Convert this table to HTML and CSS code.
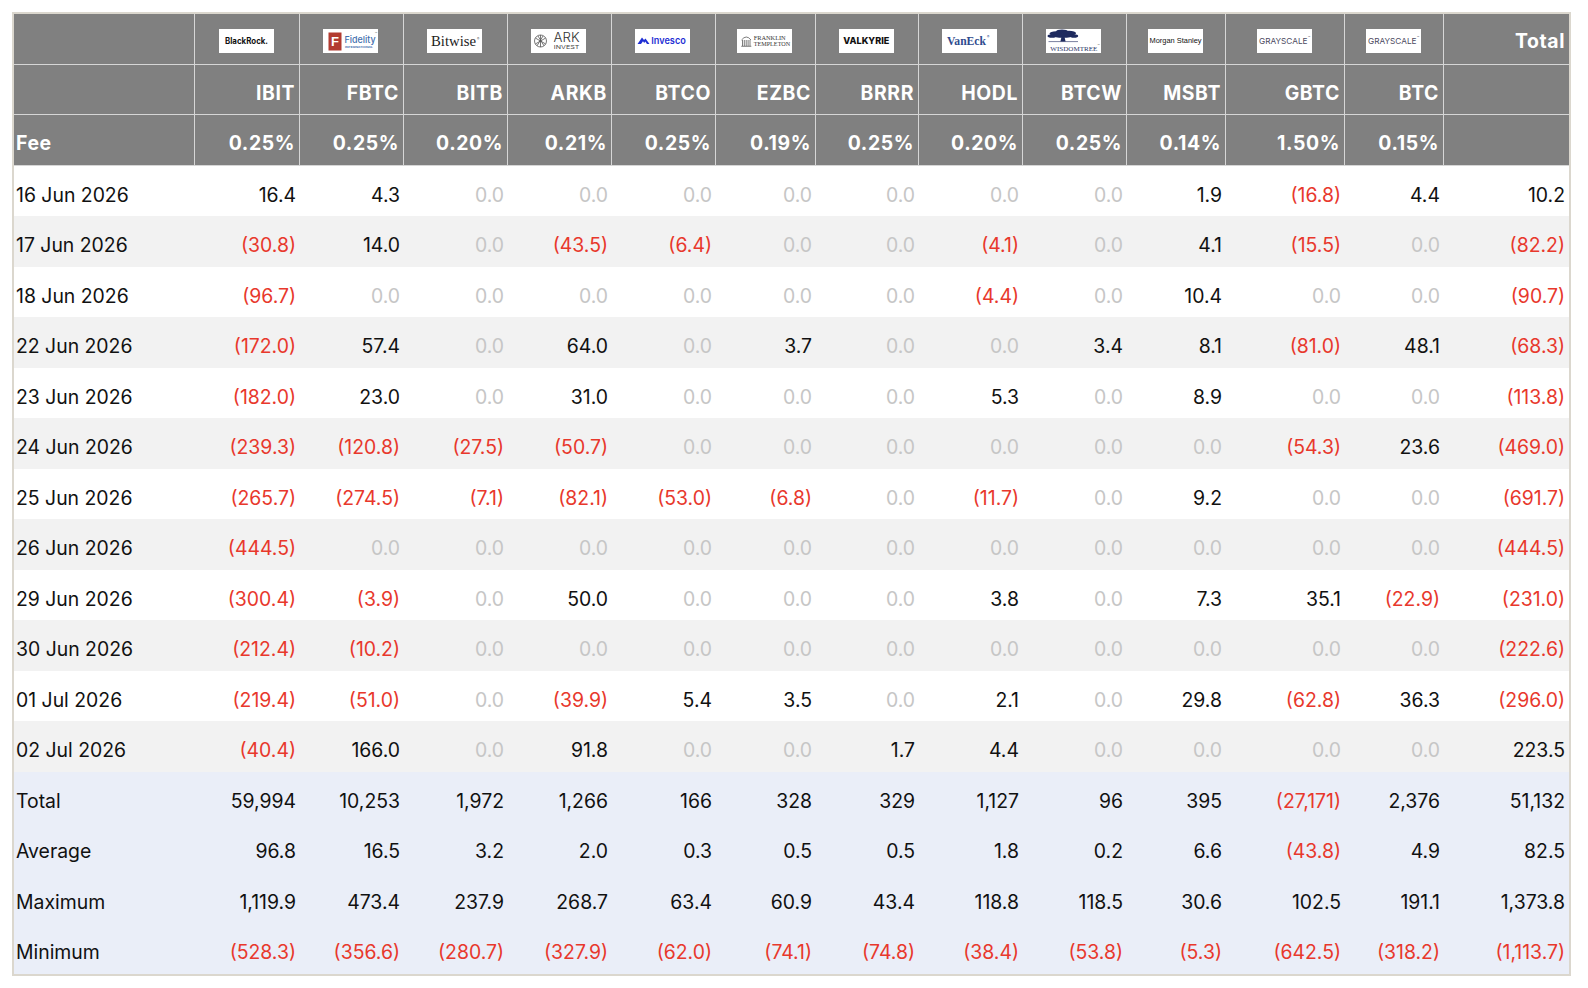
FILE: index.html
```html
<!DOCTYPE html>
<html lang="en">
<head>
<meta charset="utf-8">
<title>Bitcoin ETF Flows</title>
<link rel="stylesheet" href="styles.css">
</head>
<body>
<table class="flows">
  <colgroup>
    <col class="c-date"><col class="c-ibit"><col class="c-std"><col class="c-std"><col class="c-std"><col class="c-std"><col class="c-ezbc"><col class="c-brrr"><col class="c-std"><col class="c-std"><col class="c-msbt"><col class="c-gbtc"><col class="c-btc"><col class="c-total">
  </colgroup>
  <thead>
    <tr class="logos">
      <th></th>
      <th><span class="logo"><svg viewBox="0 0 55 24" width="55" height="24"><text x="27.5" y="15.2" text-anchor="middle" class="t-br" textLength="43" lengthAdjust="spacingAndGlyphs">BlackRock.</text></svg></span></th>
      <th><span class="logo"><svg viewBox="0 0 55 24" width="55" height="24"><rect x="5.5" y="3.5" width="13" height="18" fill="#b23b30"/><text x="12" y="17" text-anchor="middle" class="t-fid-f">F</text><text x="21.5" y="13.5" class="t-fid" textLength="31" lengthAdjust="spacingAndGlyphs">Fidelity</text><text x="22" y="19.2" class="t-fid-s" textLength="28" lengthAdjust="spacingAndGlyphs">INTERNATIONAL</text><text x="52" y="6" class="t-tm">™</text></svg></span></th>
      <th><span class="logo"><svg viewBox="0 0 55 24" width="55" height="24"><text x="4" y="16.8" class="t-bw" textLength="45" lengthAdjust="spacingAndGlyphs">Bitwise</text><text x="50" y="11" class="t-tm">®</text></svg></span></th>
      <th><span class="logo"><svg viewBox="0 0 55 24" width="55" height="24"><g fill="none" stroke="#555" stroke-width="0.8"><circle cx="9.5" cy="12" r="6"/><path d="M9.5 6 L9.5 18 M4.3 9 L14.7 15 M4.3 15 L14.7 9 M6 16.8 L12 7 M13 16.8 L7 7"/></g><text x="22.5" y="12.7" class="t-ark" textLength="26" lengthAdjust="spacingAndGlyphs">ARK</text><text x="22.8" y="20" class="t-ark-s" textLength="25.5" lengthAdjust="spacingAndGlyphs">INVEST</text></svg></span></th>
      <th><span class="logo"><svg viewBox="0 0 55 24" width="55" height="24"><path d="M2.5 15 L7 8.5 L9 11 L10.5 9.5 L14.5 15 L12 15 L10.3 12.6 L9.2 14 L8 12.2 L6 15 Z" fill="#1f2fd4"/><text x="16.3" y="15.3" class="t-inv" textLength="34.5" lengthAdjust="spacingAndGlyphs">Invesco</text></svg></span></th>
      <th><span class="logo"><svg viewBox="0 0 55 24" width="55" height="24"><g fill="none" stroke="#444" stroke-width="0.7"><path d="M4.5 11 Q9.3 5 14 11"/><path d="M5.5 11 V17 M7.3 11 V17 M9.2 11 V17 M11.1 11 V17 M13 11 V17 M4.3 17.3 H14.3"/></g><text x="16.7" y="11.2" class="t-ft" textLength="32" lengthAdjust="spacingAndGlyphs">FRANKLIN</text><text x="16.7" y="16.5" class="t-ft" textLength="36.5" lengthAdjust="spacingAndGlyphs">TEMPLETON</text></svg></span></th>
      <th><span class="logo"><svg viewBox="0 0 55 24" width="55" height="24"><text x="4.3" y="15.2" class="t-val" textLength="46" lengthAdjust="spacingAndGlyphs">VALKYRIE</text></svg></span></th>
      <th><span class="logo"><svg viewBox="0 0 55 24" width="55" height="24"><text x="5" y="16.2" class="t-ve" textLength="39" lengthAdjust="spacingAndGlyphs">VanEck</text><text x="45" y="9" class="t-tm t-tm-ve">®</text></svg></span></th>
      <th><span class="logo"><svg viewBox="0 0 55 24" width="55" height="24"><g fill="#1e2a5e"><ellipse cx="16" cy="2.6" rx="6" ry="2.2"/><ellipse cx="10" cy="4.6" rx="6.5" ry="2.4"/><ellipse cx="23" cy="4.2" rx="7" ry="2.4"/><ellipse cx="6" cy="7" rx="4.5" ry="1.8"/><ellipse cx="28" cy="7" rx="4.2" ry="1.8"/><ellipse cx="17" cy="6.6" rx="10" ry="2.2"/><path d="M15.6 7.5 L18.4 7.5 L19.6 12.4 L14.4 12.4 Z"/></g><path d="M2.5 12.6 H32" stroke="#1e2a5e" stroke-width="0.6"/><text x="4.3" y="21.6" class="t-wt" textLength="47" lengthAdjust="spacingAndGlyphs">WISDOMTREE</text><text x="51.5" y="18" class="t-tm">™</text></svg></span></th>
      <th><span class="logo"><svg viewBox="0 0 55 24" width="55" height="24"><text x="1.5" y="14.4" class="t-ms" textLength="52" lengthAdjust="spacingAndGlyphs">Morgan Stanley</text></svg></span></th>
      <th><span class="logo"><svg viewBox="0 0 55 24" width="55" height="24"><text x="2" y="14.5" class="t-gs" textLength="48.5" lengthAdjust="spacingAndGlyphs">GRAYSCALE</text><text x="51" y="9.5" class="t-tm t-tm-gs">™</text></svg></span></th>
      <th><span class="logo"><svg viewBox="0 0 55 24" width="55" height="24"><text x="2" y="14.5" class="t-gs" textLength="48.5" lengthAdjust="spacingAndGlyphs">GRAYSCALE</text><text x="51" y="9.5" class="t-tm t-tm-gs">™</text></svg></span></th>
      <th class="last">Total</th>
    </tr>
    <tr class="tickers">
      <th></th><th>IBIT</th><th>FBTC</th><th>BITB</th><th>ARKB</th><th>BTCO</th><th>EZBC</th><th>BRRR</th><th>HODL</th><th>BTCW</th><th>MSBT</th><th>GBTC</th><th>BTC</th><th class="last"></th>
    </tr>
    <tr class="fees">
      <th class="lbl">Fee</th><th>0.25%</th><th>0.25%</th><th>0.20%</th><th>0.21%</th><th>0.25%</th><th>0.19%</th><th>0.25%</th><th>0.20%</th><th>0.25%</th><th>0.14%</th><th>1.50%</th><th>0.15%</th><th class="last"></th>
    </tr>
  </thead>
  <tbody class="days">
    <tr><td class="lbl">16 Jun 2026</td><td>16.4</td><td>4.3</td><td class="z">0.0</td><td class="z">0.0</td><td class="z">0.0</td><td class="z">0.0</td><td class="z">0.0</td><td class="z">0.0</td><td class="z">0.0</td><td>1.9</td><td class="n">(16.8)</td><td>4.4</td><td>10.2</td></tr>
    <tr><td class="lbl">17 Jun 2026</td><td class="n">(30.8)</td><td>14.0</td><td class="z">0.0</td><td class="n">(43.5)</td><td class="n">(6.4)</td><td class="z">0.0</td><td class="z">0.0</td><td class="n">(4.1)</td><td class="z">0.0</td><td>4.1</td><td class="n">(15.5)</td><td class="z">0.0</td><td class="n">(82.2)</td></tr>
    <tr><td class="lbl">18 Jun 2026</td><td class="n">(96.7)</td><td class="z">0.0</td><td class="z">0.0</td><td class="z">0.0</td><td class="z">0.0</td><td class="z">0.0</td><td class="z">0.0</td><td class="n">(4.4)</td><td class="z">0.0</td><td>10.4</td><td class="z">0.0</td><td class="z">0.0</td><td class="n">(90.7)</td></tr>
    <tr><td class="lbl">22 Jun 2026</td><td class="n">(172.0)</td><td>57.4</td><td class="z">0.0</td><td>64.0</td><td class="z">0.0</td><td>3.7</td><td class="z">0.0</td><td class="z">0.0</td><td>3.4</td><td>8.1</td><td class="n">(81.0)</td><td>48.1</td><td class="n">(68.3)</td></tr>
    <tr><td class="lbl">23 Jun 2026</td><td class="n">(182.0)</td><td>23.0</td><td class="z">0.0</td><td>31.0</td><td class="z">0.0</td><td class="z">0.0</td><td class="z">0.0</td><td>5.3</td><td class="z">0.0</td><td>8.9</td><td class="z">0.0</td><td class="z">0.0</td><td class="n">(113.8)</td></tr>
    <tr><td class="lbl">24 Jun 2026</td><td class="n">(239.3)</td><td class="n">(120.8)</td><td class="n">(27.5)</td><td class="n">(50.7)</td><td class="z">0.0</td><td class="z">0.0</td><td class="z">0.0</td><td class="z">0.0</td><td class="z">0.0</td><td class="z">0.0</td><td class="n">(54.3)</td><td>23.6</td><td class="n">(469.0)</td></tr>
    <tr><td class="lbl">25 Jun 2026</td><td class="n">(265.7)</td><td class="n">(274.5)</td><td class="n">(7.1)</td><td class="n">(82.1)</td><td class="n">(53.0)</td><td class="n">(6.8)</td><td class="z">0.0</td><td class="n">(11.7)</td><td class="z">0.0</td><td>9.2</td><td class="z">0.0</td><td class="z">0.0</td><td class="n">(691.7)</td></tr>
    <tr><td class="lbl">26 Jun 2026</td><td class="n">(444.5)</td><td class="z">0.0</td><td class="z">0.0</td><td class="z">0.0</td><td class="z">0.0</td><td class="z">0.0</td><td class="z">0.0</td><td class="z">0.0</td><td class="z">0.0</td><td class="z">0.0</td><td class="z">0.0</td><td class="z">0.0</td><td class="n">(444.5)</td></tr>
    <tr><td class="lbl">29 Jun 2026</td><td class="n">(300.4)</td><td class="n">(3.9)</td><td class="z">0.0</td><td>50.0</td><td class="z">0.0</td><td class="z">0.0</td><td class="z">0.0</td><td>3.8</td><td class="z">0.0</td><td>7.3</td><td>35.1</td><td class="n">(22.9)</td><td class="n">(231.0)</td></tr>
    <tr><td class="lbl">30 Jun 2026</td><td class="n">(212.4)</td><td class="n">(10.2)</td><td class="z">0.0</td><td class="z">0.0</td><td class="z">0.0</td><td class="z">0.0</td><td class="z">0.0</td><td class="z">0.0</td><td class="z">0.0</td><td class="z">0.0</td><td class="z">0.0</td><td class="z">0.0</td><td class="n">(222.6)</td></tr>
    <tr><td class="lbl">01 Jul 2026</td><td class="n">(219.4)</td><td class="n">(51.0)</td><td class="z">0.0</td><td class="n">(39.9)</td><td>5.4</td><td>3.5</td><td class="z">0.0</td><td>2.1</td><td class="z">0.0</td><td>29.8</td><td class="n">(62.8)</td><td>36.3</td><td class="n">(296.0)</td></tr>
    <tr><td class="lbl">02 Jul 2026</td><td class="n">(40.4)</td><td>166.0</td><td class="z">0.0</td><td>91.8</td><td class="z">0.0</td><td class="z">0.0</td><td>1.7</td><td>4.4</td><td class="z">0.0</td><td class="z">0.0</td><td class="z">0.0</td><td class="z">0.0</td><td>223.5</td></tr>
  </tbody>
  <tbody class="summary">
    <tr><td class="lbl">Total</td><td>59,994</td><td>10,253</td><td>1,972</td><td>1,266</td><td>166</td><td>328</td><td>329</td><td>1,127</td><td>96</td><td>395</td><td class="n">(27,171)</td><td>2,376</td><td>51,132</td></tr>
    <tr><td class="lbl">Average</td><td>96.8</td><td>16.5</td><td>3.2</td><td>2.0</td><td>0.3</td><td>0.5</td><td>0.5</td><td>1.8</td><td>0.2</td><td>6.6</td><td class="n">(43.8)</td><td>4.9</td><td>82.5</td></tr>
    <tr><td class="lbl">Maximum</td><td>1,119.9</td><td>473.4</td><td>237.9</td><td>268.7</td><td>63.4</td><td>60.9</td><td>43.4</td><td>118.8</td><td>118.5</td><td>30.6</td><td>102.5</td><td>191.1</td><td>1,373.8</td></tr>
    <tr><td class="lbl">Minimum</td><td class="n">(528.3)</td><td class="n">(356.6)</td><td class="n">(280.7)</td><td class="n">(327.9)</td><td class="n">(62.0)</td><td class="n">(74.1)</td><td class="n">(74.8)</td><td class="n">(38.4)</td><td class="n">(53.8)</td><td class="n">(5.3)</td><td class="n">(642.5)</td><td class="n">(318.2)</td><td class="n">(1,113.7)</td></tr>
  </tbody>
</table>
</body>
</html>
```

FILE: styles.css
```css
html, body {
  background: #ffffff;
}
body {
  margin: 12px;
  font-family: Inter, "Noto Sans", "Liberation Sans", sans-serif;
  color: #111111;
}

.flows {
  border-collapse: separate;
  border-spacing: 0;
  table-layout: fixed;
  width: 1559px;
  border: 2px solid #dbd7ce;
  font-size: 19.4px;
}

.c-date { width: 181px; }
.c-ibit { width: 105px; }
.c-std { width: 104px; }
.c-ezbc { width: 100px; }
.c-brrr { width: 103px; }
.c-msbt { width: 99px; }
.c-gbtc { width: 119px; }
.c-btc { width: 99px; }
.c-total { width: 125px; }

.flows tr {
  height: 50.5px;
}

.flows th,
.flows td {
  box-sizing: border-box;
  padding: 8px 4px 0 2px;
  text-align: right;
  white-space: nowrap;
  vertical-align: middle;
  font-weight: 400;
}

.flows .lbl {
  text-align: left;
}

/* header */
.flows thead th {
  background: #808080;
  color: #ffffff;
  font-weight: 700;
  letter-spacing: 0.6px;
  border-right: 1px solid #d6d6d6;
  border-bottom: 1px solid #d6d6d6;
}
.flows thead th.last {
  border-right: none;
}
.flows thead .logos th {
  padding-top: 5px;
}
.flows thead .tickers th,
.flows thead .fees th {
  padding-top: 7px;
}

.logo {
  display: block;
  width: 55px;
  height: 24px;
  margin: 0 auto;
  background: #ffffff;
  letter-spacing: 0;
}
.logo svg {
  display: block;
  letter-spacing: 0;
}

/* logo texts */
.t-br { font: 700 8.4px Inter, sans-serif; fill: #111; letter-spacing: 0; }
.t-fid-f { font: 700 13px "Liberation Sans", sans-serif; fill: #fff; }
.t-fid { font: 500 9.3px Inter, sans-serif; fill: #3f6fae; letter-spacing: 0; }
.t-fid-s { font: 700 2.4px Inter, sans-serif; fill: #3f6fae; letter-spacing: 0; }
.t-tm { font: 400 3.5px Inter, sans-serif; fill: #666; }
.t-tm-ve { fill: #2f4b8e; }
.t-tm-gs { fill: #4c4a5e; }
.t-bw { font: 400 14.5px "Liberation Serif", serif; fill: #1c1c1c; letter-spacing: 0; }
.t-ark { font: 300 13px Inter, sans-serif; fill: #333; letter-spacing: 0; }
.t-ark-s { font: 400 5px Inter, sans-serif; fill: #444; letter-spacing: 0; }
.t-inv { font: 600 9.5px Inter, sans-serif; fill: #1f2fd4; letter-spacing: 0; }
.t-ft { font: 400 5.4px "Liberation Serif", serif; fill: #333; letter-spacing: 0; }
.t-val { font: 800 9.6px Inter, sans-serif; fill: #111; letter-spacing: 0; }
.t-ve { font: 700 13px "Liberation Serif", serif; fill: #2f4b8e; letter-spacing: 0; }
.t-wt { font: 400 6.6px "Liberation Serif", serif; fill: #2a3566; letter-spacing: 0; }
.t-ms { font: 400 7.3px "Liberation Sans", sans-serif; fill: #111; letter-spacing: 0; }
.t-gs { font: 400 8px Inter, sans-serif; fill: #4c4a5e; letter-spacing: 0; }

/* body */
.days tr:nth-child(even) td {
  background: #f2f2f2;
}
.summary td {
  background: #eaeef8;
}
.flows td.n {
  color: #e8382c;
}
.flows td.z {
  color: #c6c6c6;
}
```
